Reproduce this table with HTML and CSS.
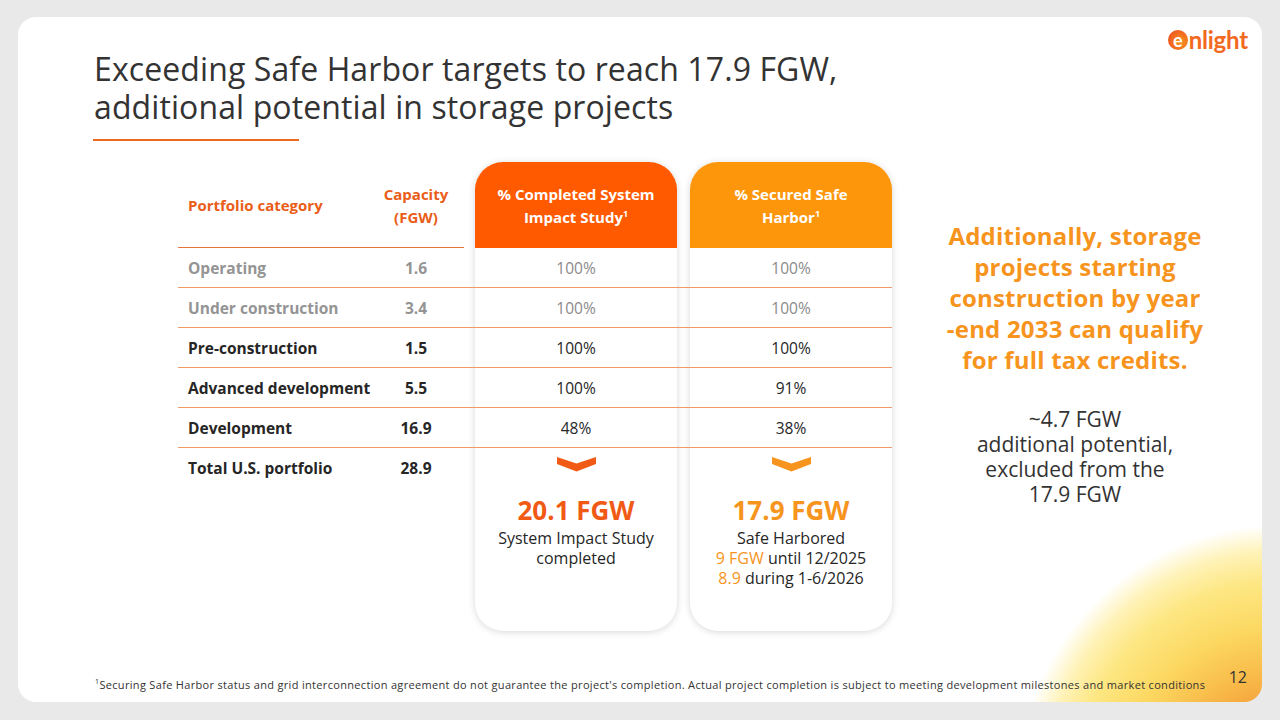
FILE: index.html
```html
<!DOCTYPE html>
<html lang="en">
<head>
<meta charset="utf-8">
<title>Safe Harbor</title>
<link rel="stylesheet" href="styles.css">
</head>
<body>
<div class="slide">
  <header class="top">
    <div class="title-block">
      <h1 class="title">Exceeding Safe Harbor targets to reach 17.9 FGW,<br>additional potential in storage projects</h1>
      <div class="rule"></div>
    </div>
    <div class="logo"><span class="logo-e">e</span>nlight</div>
  </header>

  <main class="content">
    <div class="grid">
      <div class="card card-a"><div class="card-head head-a"><span>% Completed System<br>Impact Study<sup>1</sup></span></div></div>
      <div class="card card-b"><div class="card-head head-b"><span>% Secured Safe<br>Harbor<sup>1</sup></span></div></div>

      <div class="hd hd-cat">Portfolio category</div>
      <div class="hd hd-cap">Capacity<br>(FGW)</div>
      <div class="hd-line"></div>

      <div class="line r1"></div>
      <div class="line r2"></div>
      <div class="line r3"></div>
      <div class="line r4"></div>
      <div class="line r5"></div>

      <div class="cat muted r1">Operating</div>
      <div class="cap muted r1">1.6</div>
      <div class="va soft r1">100%</div>
      <div class="vb soft r1">100%</div>

      <div class="cat muted r2">Under construction</div>
      <div class="cap muted r2">3.4</div>
      <div class="va soft r2">100%</div>
      <div class="vb soft r2">100%</div>

      <div class="cat r3">Pre-construction</div>
      <div class="cap r3">1.5</div>
      <div class="va r3">100%</div>
      <div class="vb r3">100%</div>

      <div class="cat r4">Advanced development</div>
      <div class="cap r4">5.5</div>
      <div class="va r4">100%</div>
      <div class="vb r4">91%</div>

      <div class="cat r5">Development</div>
      <div class="cap r5">16.9</div>
      <div class="va r5">48%</div>
      <div class="vb r5">38%</div>

      <div class="cat r6">Total U.S. portfolio</div>
      <div class="cap r6">28.9</div>
      <div class="chev chev-a"><svg width="39" height="15" viewBox="0 0 39 15"><polygon points="0,0 19.5,6.5 39,0 39,7 19.5,14.5 0,7" fill="#f05a14"/></svg></div>
      <div class="chev chev-b"><svg width="39" height="15" viewBox="0 0 39 15"><polygon points="0,0 19.5,6.5 39,0 39,7 19.5,14.5 0,7" fill="#f7941d"/></svg></div>

      <div class="sum sum-a">
        <div class="big big-a">20.1 FGW</div>
        <div class="desc">System Impact Study<br>completed</div>
      </div>
      <div class="sum sum-b">
        <div class="big big-b">17.9 FGW</div>
        <div class="desc">Safe Harbored<br><span class="hl">9 FGW</span> until 12/2025<br><span class="hl">8.9</span> during 1-6/2026</div>
      </div>
    </div>

    <aside class="side">
      <p class="side-lead">Additionally, storage<br>projects starting<br>construction by year<br>-end 2033 can qualify<br>for full tax credits.</p>
      <p class="side-note">~4.7 FGW<br>additional potential,<br>excluded from the<br>17.9 FGW</p>
    </aside>
  </main>

  <footer class="foot">
    <p class="note"><sup>1</sup>Securing Safe Harbor status and grid interconnection agreement do not guarantee the project's completion. Actual project completion is subject to meeting development milestones and market conditions</p>
    <span class="pgnum">12</span>
  </footer>
</div>
</body>
</html>
```

FILE: styles.css
```css
* { box-sizing: border-box; }
html, body { margin: 0; padding: 0; }
body {
  background: #e9e9e9;
  font-family: "Open Sans", "Lato", sans-serif;
  color: #333;
  width: 1280px;
  height: 720px;
  overflow: hidden;
}
.slide {
  margin: 17px 0 0 18px;
  width: 1244px;
  height: 685px;
  background-color: #fff;
  background-image: radial-gradient(circle at 1262px 770px,
    #f29733 0px, #f5a53c 85px, #f9bf4c 120px, #fcd862 160px,
    #fde783 205px, #fff2b6 235px, rgba(255,255,255,0) 262px);
  border-radius: 18px;
  overflow: hidden;
  display: flex;
  flex-direction: column;
}

/* header */
.top {
  display: flex;
  justify-content: space-between;
  align-items: flex-start;
  padding: 11px 14px 0 75px;
}
.title-block { margin-top: 22px; }
.title {
  margin: 0;
  font-weight: 400;
  font-size: 32px;
  line-height: 38px;
  letter-spacing: 0.1px;
  color: #333;
  padding-left: 1px;
}
.rule {
  margin-top: 13px;
  width: 206px;
  height: 2px;
  background: #ea6a22;
}
.logo {
  font-family: "Lato", sans-serif;
  font-weight: 700;
  font-size: 24px;
  line-height: 24px;
  color: #f26a1f;
  letter-spacing: -0.2px;
  display: flex;
  align-items: center;
}
.logo-e {
  display: inline-flex;
  align-items: center;
  justify-content: center;
  width: 20px;
  height: 20px;
  border-radius: 50%;
  background: radial-gradient(circle at 65% 60%, #f7941d 0, #f26522 60%, #e2401a 100%);
  color: #fff;
  font-size: 18px;
  line-height: 20px;
  margin-right: 1px;
}

/* content */
.content {
  display: flex;
  margin-top: 21px;
  padding-left: 160px;
}
.grid {
  display: grid;
  grid-template-columns: 190px 96px 11px 202px 13px 202px;
  grid-template-rows: 86px repeat(6, 40px) 143px;
}
.card {
  grid-row: 1 / -1;
  background: #fff;
  border-radius: 28px;
  box-shadow: 0 1px 7px rgba(0,0,0,0.16);
  overflow: hidden;
}
.card-a { grid-column: 4; }
.card-b { grid-column: 6; }
.card-head {
  height: 86px;
  display: flex;
  align-items: center;
  justify-content: center;
  text-align: center;
  color: #fff;
  font-weight: 700;
  font-size: 15px;
  line-height: 23px;
  padding-top: 2px;
}
.head-a { background: #ff5a00; }
.head-b { background: #fd960b; }
sup { font-size: 0.6em; line-height: 0; vertical-align: super; }

.hd {
  grid-row: 1;
  align-self: center;
  color: #ea5d18;
  font-weight: 700;
  font-size: 15px;
  line-height: 23px;
}
.hd-cat { grid-column: 1; padding-left: 10px; }
.hd-cap { grid-column: 2; text-align: center; padding-top: 2px; }
.hd-line {
  grid-row: 1;
  grid-column: 1 / 3;
  border-bottom: 1.5px solid #e8763a;
}

.line {
  grid-column: 1 / -1;
  border-bottom: 1.5px solid #f19a68;
}
.r1 { grid-row: 2; }
.r2 { grid-row: 3; }
.r3 { grid-row: 4; }
.r4 { grid-row: 5; }
.r5 { grid-row: 6; }
.r6 { grid-row: 7; }

.cat, .cap, .va, .vb {
  align-self: center;
  font-size: 15.5px;
  line-height: 20px;
  color: #262626;
  white-space: nowrap;
}
.cat { grid-column: 1; padding-left: 10px; font-weight: 700; }
.cap { grid-column: 2; text-align: center; font-weight: 700; }
.va { grid-column: 4; text-align: center; }
.vb { grid-column: 6; text-align: center; }
.muted { color: #949494; }
.soft { color: #8a8a8a; }

.chev {
  grid-row: 7;
  align-self: start;
  justify-self: center;
  margin-top: 9px;
  line-height: 0;
}
.chev-a { grid-column: 4; }
.chev-b { grid-column: 6; }

.sum {
  grid-row: 8;
  text-align: center;
  padding-top: 4px;
}
.sum-a { grid-column: 4; }
.sum-b { grid-column: 6; }
.big {
  font-weight: 700;
  font-size: 26px;
  line-height: 36px;
}
.big-a { color: #f05a14; }
.big-b { color: #f7941d; }
.desc {
  font-size: 16px;
  line-height: 20px;
  color: #262626;
}
.hl { color: #f7941d; }

.side {
  width: 300px;
  margin-left: 33px;
  text-align: center;
}
.side-lead {
  margin: 58px 0 0;
  font-weight: 700;
  font-size: 24px;
  line-height: 31px;
  letter-spacing: 0.2px;
  color: #f7941d;
}
.side-note {
  margin: 32px 0 0;
  font-size: 21px;
  line-height: 25px;
  color: #333;
}

/* footer */
.foot {
  margin-top: auto;
  display: flex;
  align-items: flex-end;
  justify-content: space-between;
  padding: 0 15px 10px 77px;
}
.note {
  margin: 0;
  font-size: 11px;
  line-height: 14px;
  color: #333;
  letter-spacing: 0.32px;
}
.note sup { font-size: 0.65em; }
.pgnum {
  font-size: 16px;
  line-height: 20px;
  color: #333;
  margin-bottom: 5px;
}
```
